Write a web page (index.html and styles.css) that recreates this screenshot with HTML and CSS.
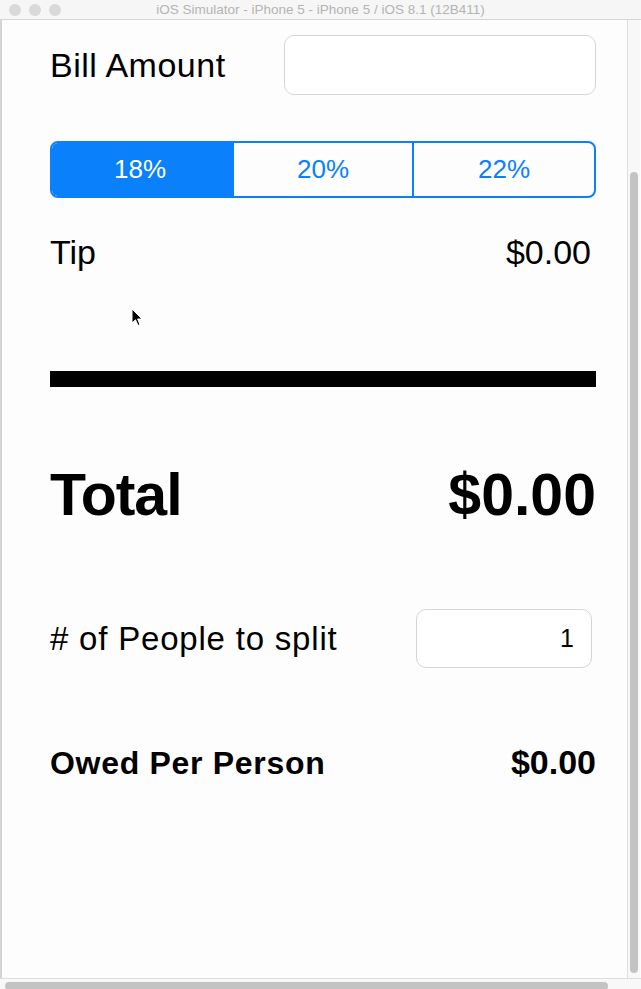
FILE: index.html
```html
<!DOCTYPE html>
<html>
<head>
<meta charset="utf-8">
<title>Tip Calculator</title>
<link rel="stylesheet" href="styles.css">
</head>
<body>
<div class="window">
  <div class="titlebar">
    <div class="lights"><span></span><span></span><span></span></div>
    <div class="title">iOS Simulator - iPhone 5 - iPhone 5 / iOS 8.1 (12B411)</div>
    <div></div>
  </div>
  <div class="body">
    <div class="leftedge"></div>
    <div class="screen">
      <div class="bill-row">
        <div class="label bill-label">Bill Amount</div>
        <div class="field bill-field"></div>
      </div>
      <div class="segmented">
        <div class="seg selected">18%</div>
        <div class="seg">20%</div>
        <div class="seg">22%</div>
      </div>
      <div class="tip-row">
        <div class="label">Tip</div>
        <div class="tip-value">$0.00</div>
      </div>
      <div class="bar"></div>
      <div class="total-row">
        <div class="total-label">Total</div>
        <div class="total-value">$0.00</div>
      </div>
      <div class="people-row">
        <div class="people-label"># of People to split</div>
        <div class="field people-field">1</div>
      </div>
      <div class="owed-row">
        <div class="owed-label">Owed Per Person</div>
        <div class="owed-value">$0.00</div>
      </div>
      <svg class="cursor" width="12" height="19" viewBox="0 0 12 19">
        <path d="M1 1 L1 15 L4.5 11.8 L7 17.5 L9 16.6 L6.6 11 L11 11 Z" fill="#000" stroke="#fff" stroke-width="1"/>
      </svg>
    </div>
    <div class="vtrack"><div class="vthumb"></div></div>
  </div>
  <div class="htrack"><div class="hthumb"></div></div>
</div>
</body>
</html>
```
FILE: styles.css
```css
html, body {
  margin: 0;
  padding: 0;
  background: #fdfdfd;
}
.window {
  width: 641px;
  height: 989px;
  display: flex;
  flex-direction: column;
  overflow: hidden;
  font-family: "Liberation Sans", Arial, sans-serif;
  color: #000;
}
.titlebar {
  height: 19px;
  border-bottom: 1px solid #d6d6d6;
  background: #f6f6f6;
  display: grid;
  grid-template-columns: 1fr auto 1fr;
  align-items: center;
}
.lights {
  display: flex;
  gap: 8px;
  padding-left: 9px;
}
.lights span {
  width: 12px;
  height: 12px;
  border-radius: 50%;
  background: #d9d9d9;
  display: block;
}
.title {
  font-size: 13.5px;
  color: #b4b4b4;
  line-height: 19px;
  white-space: nowrap;
}
.body {
  display: flex;
  height: 958px;
}
.leftedge {
  width: 2px;
  background: #d4d4d4;
}
.screen {
  position: relative;
  width: 626px;
  box-sizing: border-box;
  padding: 15px 31px 0 48px;
  background: #fdfdfd;
  border-right: 1px solid #dedede;
}
.vtrack {
  width: 12px;
  background: #f8f8f8;
  display: flex;
  justify-content: center;
  padding-top: 152px;
  box-sizing: border-box;
}
.vthumb {
  width: 8px;
  height: 801px;
  border-radius: 4px;
  background: #c3c3c3;
}
.htrack {
  height: 11px;
  border-top: 1px solid #dedede;
  background: #f8f8f8;
  padding: 3px 0 0 5px;
  box-sizing: border-box;
}
.hthumb {
  width: 603px;
  height: 8px;
  border-radius: 4px;
  background: #c3c3c3;
}
.label {
  font-size: 34px;
  line-height: 40px;
}
.bill-label {
  letter-spacing: 0.5px;
}
.bill-row {
  display: flex;
  justify-content: space-between;
  align-items: center;
}
.field {
  box-sizing: border-box;
  border: 1px solid #d5d5d5;
  border-radius: 10px;
  background: #fff;
}
.bill-field {
  width: 312px;
  height: 60px;
}
.segmented {
  margin-top: 46px;
  height: 57px;
  box-sizing: border-box;
  border: 2px solid #0a80fb;
  border-radius: 8px;
  overflow: hidden;
  display: grid;
  grid-template-columns: 180px 180px 1fr;
}
.seg {
  display: flex;
  align-items: center;
  justify-content: center;
  font-size: 26px;
  color: #0a80fb;
  border-left: 2px solid #0a80fb;
}
.seg.selected {
  border-left: none;
  background: #0a80fb;
  color: #fff;
  padding-right: 4px;
}
.tip-row {
  margin-top: 34px;
  display: flex;
  justify-content: space-between;
  align-items: baseline;
}
.tip-value {
  font-size: 34px;
  line-height: 40px;
  margin-right: 5px;
}
.bar {
  margin-top: 99px;
  height: 16px;
  background: #000;
}
.total-row {
  margin-top: 75px;
  display: flex;
  justify-content: space-between;
  align-items: baseline;
  font-size: 59px;
  line-height: 66px;
  font-weight: bold;
}
.total-label {
  letter-spacing: -1px;
}
.total-value {
  margin-right: 0;
}
.people-row {
  margin-top: 81px;
  display: flex;
  justify-content: space-between;
  align-items: center;
}
.people-label {
  font-size: 33px;
  line-height: 40px;
  letter-spacing: 0.8px;
}
.people-field {
  width: 176px;
  height: 59px;
  margin-right: 4px;
  font-size: 25px;
  line-height: 57px;
  text-align: right;
  padding-right: 17px;
}
.owed-row {
  margin-top: 74px;
  display: flex;
  justify-content: space-between;
  align-items: baseline;
  font-weight: bold;
}
.owed-label {
  font-size: 32px;
  line-height: 40px;
  letter-spacing: 0.7px;
}
.owed-value {
  font-size: 34px;
  line-height: 40px;
  margin-right: 0;
}
.cursor {
  position: absolute;
  left: 129px;
  top: 288px;
}
```
